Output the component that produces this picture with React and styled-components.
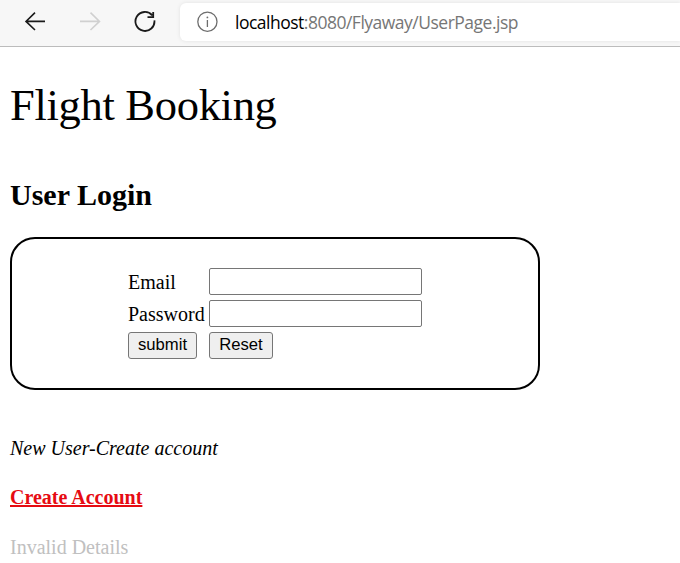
import React from "react";
import styled, { createGlobalStyle } from "styled-components";

const GlobalStyle = createGlobalStyle`
  *, *::before, *::after { box-sizing: border-box; }
  html, body { margin: 0; background: #fff; overflow: hidden; }
`;

const Window = styled.div`
  height: 563px;
  overflow: hidden;
  color: #000;
  font-family: "Liberation Serif", "Times New Roman", serif;
  font-size: 20px;
`;

const Toolbar = styled.header`
  display: flex;
  align-items: flex-start;
  height: 47px;
  padding-left: 24px;
  background: #f7f7f7;
  border-bottom: 1px solid #bcbcbc;
`;

const NavButtons = styled.nav`
  display: flex;
  gap: 33px;
  width: 156px;
  padding-top: 10px;
`;

const IconButton = styled.button`
  display: flex;
  width: 22px;
  height: 23px;
  padding: 0;
  border: 0;
  background: none;
  color: ${(p) => (p.disabled ? "#d0d0d0" : "#1a1a1a")};
`;

const AddressBar = styled.div`
  display: flex;
  flex: 1;
  height: 38px;
  margin-top: 3px;
  padding: 7px 0 0 16px;
  gap: 17px;
  border-radius: 6px 0 0 6px;
  background: #fff;
  box-shadow: 0 0 4px rgba(0, 0, 0, 0.09);
  color: #6d6d6d;
`;

const Url = styled.span`
  font: 17.5px/24px "Open Sans", "Noto Sans", sans-serif;
  letter-spacing: -0.5px;
  white-space: nowrap;
  color: #767676;
`;

const Host = styled.span`
  color: #000;
`;

const Page = styled.main`
  padding: 0 10px;
`;

const Title = styled.h1`
  margin: 31px 0 0;
  font-size: 44.5px;
  font-weight: 400;
  line-height: 54px;
  letter-spacing: -0.3px;
`;

const Heading = styled.h2`
  margin: 46px 0 0;
  font-size: 30px;
  line-height: 34px;
`;

const LoginForm = styled.form`
  display: flex;
  justify-content: center;
  align-items: flex-start;
  width: 530px;
  height: 153px;
  margin-top: 25px;
  padding: 29px 0 0;
  border: 2px solid #000;
  border-radius: 25px;
`;

const Fields = styled.div`
  display: grid;
  grid-template-columns: 78px 213px;
  grid-auto-rows: 27px;
  gap: 5px 3px;
  justify-items: start;
`;

const Label = styled.label`
  line-height: 29px;
  white-space: nowrap;
`;

const Input = styled.input`
  width: 213px;
  height: 27px;
  margin: 0;
  padding: 1px 3px;
  border: 1px solid #767676;
  border-radius: 2px;
  background: #fff;
`;

const FormButton = styled.button`
  width: ${(p) => p.$width}px;
  height: 27px;
  padding: 0 0 2px;
  border: 1px solid #767676;
  border-radius: 3px;
  background: #efefef;
  color: #000;
  font: 16.67px/23px "Liberation Sans", Arial, sans-serif;
`;

const Hint = styled.p`
  margin: 46px 0 0;
  line-height: 24px;
  font-style: italic;
`;

const AccountLink = styled.a`
  display: block;
  width: max-content;
  margin-top: 25px;
  line-height: 24px;
  font-weight: 700;
  color: #e60b12;
  text-decoration: underline;
  text-decoration-thickness: 2px;
  text-decoration-skip-ink: none;
  text-underline-offset: 1px;
`;

const Status = styled.p`
  margin: 26px 0 0;
  line-height: 24px;
  color: #c0c0c0;
`;

function Icon({ children, width = 22, strokeWidth = 1.6 }) {
  return (
    <svg width={width} height="23" viewBox={`0 0 ${width} 23`} fill="none" stroke="currentColor" strokeWidth={strokeWidth}>
      {children}
    </svg>
  );
}

export default function App() {
  return (
    <Window>
      <GlobalStyle />
      <Toolbar>
        <NavButtons>
          <IconButton type="button" aria-label="Back">
            <Icon><path d="M21 11.4H2M11 2.6 2 11.4l9 8.6" /></Icon>
          </IconButton>
          <IconButton type="button" aria-label="Forward" disabled>
            <Icon><path d="M1 11.4h19.5M11.5 2.6l9 8.8-9 8.6" /></Icon>
          </IconButton>
          <IconButton type="button" aria-label="Reload">
            <Icon strokeWidth={1.8}>
              <path d="M18.2 5.3A9.5 9.5 0 1 0 20.4 10.4M19.2 2v5.2h-5.7" />
            </Icon>
          </IconButton>
        </NavButtons>
        <AddressBar>
          <Icon strokeWidth={1.3}>
            <circle cx="11.4" cy="11.7" r="9.6" />
            <path d="M11.4 10v7" />
            <circle cx="11.4" cy="7.4" r="0.9" fill="currentColor" stroke="none" />
          </Icon>
          <Url><Host>localhost</Host>:8080/Flyaway/UserPage.jsp</Url>
        </AddressBar>
      </Toolbar>
      <Page>
        <Title>Flight Booking</Title>
        <Heading>User Login</Heading>
        <LoginForm onSubmit={(e) => e.preventDefault()}>
          <Fields>
            <Label htmlFor="email">Email</Label>
            <Input id="email" type="text" />
            <Label htmlFor="password">Password</Label>
            <Input id="password" type="password" />
            <FormButton type="submit" $width={69}>submit</FormButton>
            <FormButton type="reset" $width={64}>Reset</FormButton>
          </Fields>
        </LoginForm>
        <Hint>New User-Create account</Hint>
        <AccountLink href="#">Create Account</AccountLink>
        <Status>Invalid Details</Status>
      </Page>
    </Window>
  );
}
